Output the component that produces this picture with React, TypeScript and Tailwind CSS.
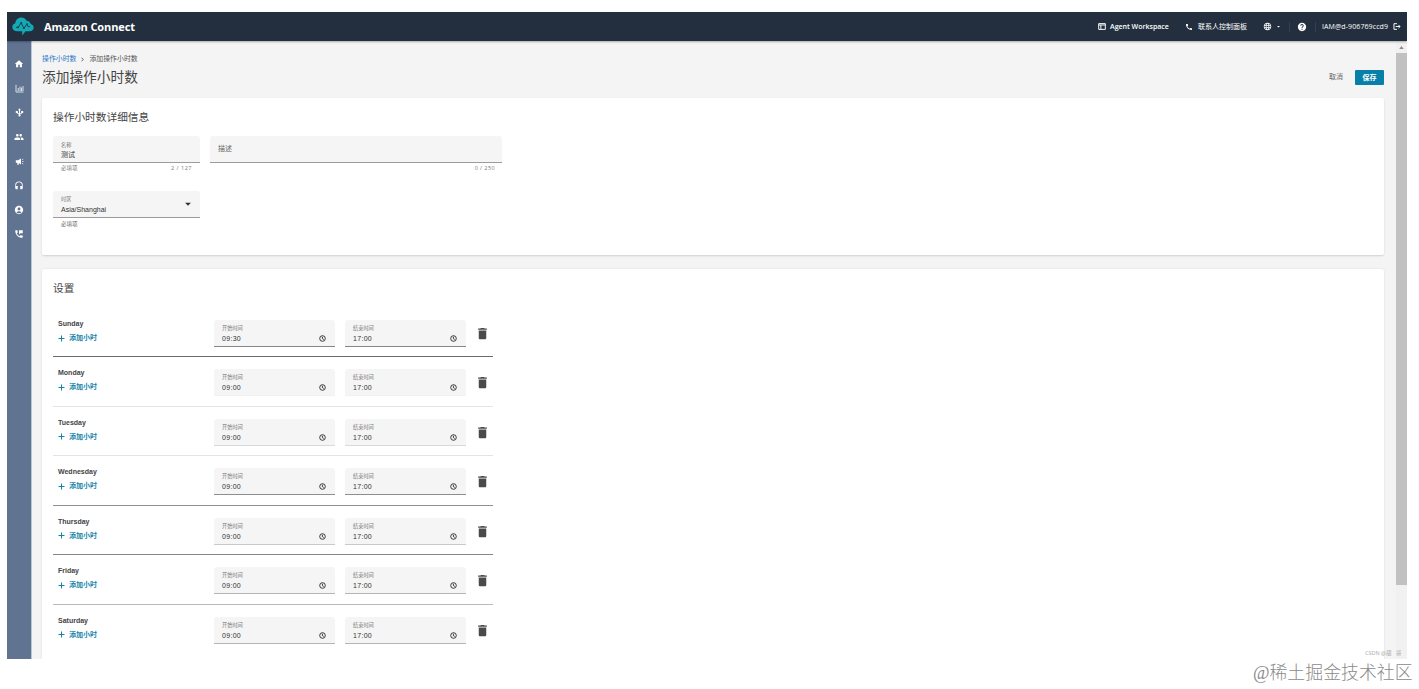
import React from 'react';
import {
  MdAccountCircle,
  MdArrowDropDown,
  MdCall,
  MdDelete,
  MdHeadset,
  MdHelp,
  MdHome,
  MdLanguage,
  MdPeople,
  MdPermPhoneMsg,
} from 'react-icons/md';

interface DayHours {
  day: string;
  start: string;
  end: string;
  fieldLine: string;
  rowLine: string;
}

const days: DayHours[] = [
  { day: 'Sunday', start: '09:30', end: '17:00', fieldLine: 'border-[#858585]', rowLine: 'border-[#6c6c6c]' },
  { day: 'Monday', start: '09:00', end: '17:00', fieldLine: 'border-[#f1f1f1]', rowLine: 'border-[#e4e4e4]' },
  { day: 'Tuesday', start: '09:00', end: '17:00', fieldLine: 'border-[#d9d9d9]', rowLine: 'border-[#e4e4e4]' },
  { day: 'Wednesday', start: '09:00', end: '17:00', fieldLine: 'border-[#8e8e8e]', rowLine: 'border-[#909090]' },
  { day: 'Thursday', start: '09:00', end: '17:00', fieldLine: 'border-[#c9c9c9]', rowLine: 'border-[#868686]' },
  { day: 'Friday', start: '09:00', end: '17:00', fieldLine: 'border-[#b5b5b5]', rowLine: 'border-[#b9bbb8]' },
  { day: 'Saturday', start: '09:00', end: '17:00', fieldLine: 'border-[#b5b5b5]', rowLine: 'border-transparent' },
];

function CloudLogo() {
  return (
    <svg viewBox="0 0 22 19" className="h-[19px] w-[22px]">
      <path
        d="M5.2 14.2C2.2 14.2.3 12.5.3 10.2c0-2 1.3-3.5 3-3.9C3.5 2.9 6.200.6 9.300.6c2.500 0 4.500 1.300 5.500 3.300 2.200-.2 3.700 1.300 3.800 3.200 1.900.3 3.100 1.600 3.100 3.400 0 2.200-1.700 3.700-3.900 3.700h-4.300l-3.300 4.300v-4.300z"
        fill="#13a9b5"
      />
      <path d="M4 10.500l2.200-.2 3-4.300 2.700 5.300 3-4.200 1.200 2.600h2" fill="none" stroke="#17464f" strokeWidth="1" />
      <circle cx="9.200" cy="6" r="1.100" fill="#17464f" />
      <circle cx="11.900" cy="11" r="1.100" fill="#17464f" />
      <circle cx="6" cy="10.300" r="1" fill="#17464f" />
      <circle cx="15" cy="7.200" r="1" fill="#17464f" />
    </svg>
  );
}

function ChartIcon() {
  return (
    <svg viewBox="0 0 9 9" className="h-[9px] w-[9px]" fill="none" stroke="#d5dce7" strokeWidth="1">
      <path d="M1 .8v7.200h7.500M3.200 7V4M5 7V2.500M6.500 7V3.500M8 7V2" />
    </svg>
  );
}

function RoutingIcon() {
  return (
    <svg viewBox="0 0 9 9" className="h-[9px] w-[9px]" fill="none" stroke="#fff" strokeWidth="1">
      <path d="M4.500 7V2M1.800 4v.8l2.700 1.500 2.700-1.500V4" />
      <path d="M4.500.3L6 2.300H3zM.8 3h2v2h-2zM6.200 3h2v2h-2z" fill="#fff" stroke="none" />
      <circle cx="4.500" cy="7.500" r="1.100" fill="#fff" stroke="none" />
    </svg>
  );
}

function CampaignIcon() {
  return (
    <svg viewBox="0 0 9 9" className="h-[9px] w-[9px]" fill="#fff">
      <path d="M.8 3.200h2.200L6 1.500v6L3.800 6v1.700H2.300V5.800H.8z" />
      <path d="M7 2.800l1.200-.8M7.200 4.500h1.400M7 6.200l1.200.8" stroke="#fff" strokeWidth=".7" />
    </svg>
  );
}

function WorkspaceIcon() {
  return (
    <svg viewBox="0 0 9 8" className="h-[7px] w-[8px]" fill="none" stroke="#fff" strokeWidth="1.100">
      <path d="M.7.7h7.600v6.600H.7zM.7 2.300h7.600M3.200 2.300v5" />
    </svg>
  );
}

function SignOutIcon() {
  return (
    <svg viewBox="0 0 9 8" className="h-[7px] w-[8px]" fill="none" stroke="#fff" strokeWidth="1.100">
      <path d="M4.500.8H1v6.400h3.500M3 4h5M6.200 2.200L8 4 6.200 5.800" />
    </svg>
  );
}

function ClockIcon() {
  return (
    <svg viewBox="0 0 8 8" className="mr-px h-[7px] w-[7px]" fill="none" stroke="#222" strokeWidth="1">
      <circle cx="4" cy="4" r="3.200" />
      <path d="M3.900 2v2.200l1.500.9" />
    </svg>
  );
}

function Sidebar() {
  const icons = [
    <MdHome size={10} />,
    <ChartIcon />,
    <RoutingIcon />,
    <MdPeople size={10} />,
    <CampaignIcon />,
    <MdHeadset size={10} />,
    <MdAccountCircle size={10} />,
    <MdPermPhoneMsg size={10} />,
  ];

  return (
    <nav className="w-[25px] shrink-0 border-r border-[#b9c5d8] bg-[#607492] pt-[11px] text-white">
      {icons.map((icon, idx) => (
        <div key={idx} className="flex h-[24.3px] items-center justify-center">
          {icon}
        </div>
      ))}
    </nav>
  );
}

function Header() {
  return (
    <header className="z-10 flex h-[29px] shrink-0 items-center bg-[#232f3e] pl-[5px] pr-[6px] text-white shadow-[0_1px_2px_rgba(0,0,0,0.3)]">
      <CloudLogo />
      <span className="ml-[10px] text-[11px] font-bold leading-none tracking-[-0.12px]">Amazon Connect</span>
      <div className="ml-auto flex items-center whitespace-nowrap text-[7px] leading-none">
        <WorkspaceIcon />
        <span className="ml-1 w-[58px] font-semibold">Agent Workspace</span>
        <MdCall size={8} className="ml-[17px]" />
        <span className="ml-[5px] w-[49px]">联系人控制面板</span>
        <MdLanguage size={9} className="ml-4" />
        <MdArrowDropDown size={7} className="ml-[3px]" />
        <span className="ml-[7px] h-[10px] w-px bg-[#35414f]" />
        <MdHelp size={10} className="ml-[7px]" />
        <span className="ml-[8px] h-[10px] w-px bg-[#35414f]" />
        <span className="ml-[6px] w-[68px] tracking-[0.1px]">IAM@d-906769ccd9</span>
        <span className="ml-[3px]">
          <SignOutIcon />
        </span>
      </div>
    </header>
  );
}

function DetailsCard() {
  return (
    <section className="h-[157px] rounded-[2px] bg-white px-[11px] pt-[12px] shadow-[0_1px_2px_rgba(0,0,0,0.15)]">
      <h2 className="text-[10.7px] leading-[14px] text-[#444]">操作小时数详细信息</h2>
      <div className="mt-[12px] flex gap-[10px]">
        <div className="w-[147px]">
          <div className="h-[27px] rounded-t-[3px] border-b border-[#9c9c9c] bg-[#f5f5f5] px-2 pt-[6px]">
            <div className="text-[5.2px] leading-[6px] text-[#777]">名称</div>
            <div className="mt-[2px] text-[7px] leading-[9px] text-[#333]">测试</div>
          </div>
          <div className="flex justify-between px-2 pt-[1px] text-[5.5px] leading-[8px] text-[#777]">
            <span>必填项</span>
            <span className="tracking-[0.5px]">2 / 127</span>
          </div>
        </div>
        <div className="w-[292px]">
          <div className="flex h-[27px] items-center rounded-t-[3px] border-b border-[#9c9c9c] bg-[#f5f5f5] px-2 pt-px text-[7px] text-[#666]">
            描述
          </div>
          <div className="pl-2 pr-[7px] pt-[1px] text-right text-[5.5px] leading-[8px] tracking-[0.4px] text-[#777]">0 / 250</div>
        </div>
      </div>
      <div className="mt-[19px] w-[147px]">
        <div className="flex h-[27px] justify-between rounded-t-[3px] border-b border-[#9c9c9c] bg-[#f5f5f5] pl-2 pr-[5px] pt-[5px]">
          <div>
            <div className="text-[5.2px] leading-[6px] text-[#777]">时区</div>
            <div className="mt-[3px] font-['Liberation_Sans'] text-[7px] leading-[9px] text-[#333]">Asia/Shanghai</div>
          </div>
          <MdArrowDropDown size={14} className="mt-px text-[#333]" />
        </div>
        <div className="px-2 pt-[2px] text-[5.5px] leading-[8px] text-[#666]">必填项</div>
      </div>
    </section>
  );
}

function TimeField({ label, value, line }: { label: string; value: string; line: string }) {
  return (
    <div className={`h-[27px] w-[121px] rounded-t-[3px] border-b bg-[#f5f5f5] px-2 pt-[5px] ${line}`}>
      <div className="text-[5.2px] leading-[7px] text-[#777]">{label}</div>
      <div className="mt-[2px] flex items-center justify-between text-[#333]">
        <span className="font-['Liberation_Sans'] text-[7px] leading-[9px] tracking-[0.3px]">{value}</span>
        <ClockIcon />
      </div>
    </div>
  );
}

function DayRow({ item }: { item: DayHours }) {
  return (
    <div className={`flex h-[49.45px] w-[440px] items-start border-b pl-[5px] pt-[12px] ${item.rowLine}`}>
      <div className="w-[156px]">
        <div className="font-['Liberation_Sans'] text-[7px] font-bold leading-[8px] text-[#444]">{item.day}</div>
        <div className="mt-[5px] flex items-center text-[7px] font-bold leading-[10px] text-[#1483aa]">
          <svg viewBox="0 0 7 7" className="mr-[4px] h-[7px] w-[7px]" stroke="currentColor" strokeWidth="1">
            <path d="M3.500.5v6M.5 3.500h6" />
          </svg>
          添加小时
        </div>
      </div>
      <div className="flex gap-[10px]">
        <TimeField label="开始时间" value={item.start} line={item.fieldLine} />
        <TimeField label="结束时间" value={item.end} line={item.fieldLine} />
      </div>
      <MdDelete size={15} className="ml-[9px] mt-[6px] text-[#4a4a4a]" />
    </div>
  );
}

export default function App() {
  return (
    <div className="relative h-[689px] w-[1419px] overflow-hidden bg-white pl-[7px] pt-[12px] font-['Open_Sans','Noto_Sans_CJK_SC',sans-serif]">
      <div className="flex h-[647px] w-[1400px] flex-col overflow-hidden bg-[#f4f4f4]">
        <Header />
        <div className="flex min-h-0 flex-1">
          <Sidebar />
          <main className="min-w-0 flex-1 pl-[10px] pr-[12px] pt-[13px]">
            <div className="flex items-center gap-[5px] text-[6.9px] leading-[10px] text-[#555]">
              <span className="text-[#2b74c7]">操作小时数</span>
              <svg viewBox="0 0 4 6" className="h-[5px] w-[3px]" fill="none" stroke="#333" strokeWidth="1">
                <path d="M.7.6L3 3 .7 5.400" />
              </svg>
              <span>添加操作小时数</span>
            </div>
            <div className="flex h-[26px] items-center justify-between">
              <h1 className="text-[13.7px] leading-[18px] text-[#444]">添加操作小时数</h1>
              <div className="flex items-center text-[7px]">
                <span className="text-[#666]">取消</span>
                <button className="ml-[12px] h-[15px] w-[29px] rounded-[1px] bg-[#077fa8] font-bold leading-none text-white">保存</button>
              </div>
            </div>
            <div className="mt-[8px]">
              <DetailsCard />
            </div>
            <section className="mt-[14px] h-[400px] rounded-[2px] bg-white pl-[11px] pt-[12px] shadow-[0_0_2px_rgba(0,0,0,0.12)]">
              <h2 className="mb-[13px] text-[10.7px] leading-[14px] text-[#444]">设置</h2>
              {days.map((item) => (
                <DayRow key={item.day} item={item} />
              ))}
            </section>
          </main>
          <div className="flex w-[11px] shrink-0 flex-col items-center bg-[#f1f1f1]">
            <div className="flex h-[12px] items-center">
              <svg viewBox="0 0 6 4" className="h-[3px] w-[5px]" fill="#8a8a8a">
                <path d="M3 0l3 4H0z" />
              </svg>
            </div>
            <div className="h-[532px] w-full bg-[#c1c1c1]" />
          </div>
        </div>
      </div>
      <span className="absolute left-[1365px] top-[649px] whitespace-pre text-[5.5px] leading-[8px] text-[#aaa]">CSDN @靓   哥</span>
      <span className="absolute left-[1253px] top-[661px] whitespace-nowrap font-['Liberation_Serif','Noto_Sans_CJK_SC',serif] text-[17.9px] font-light leading-[24px] text-[#8a8a8a]">
        @稀土掘金技术社区
      </span>
    </div>
  );
}
